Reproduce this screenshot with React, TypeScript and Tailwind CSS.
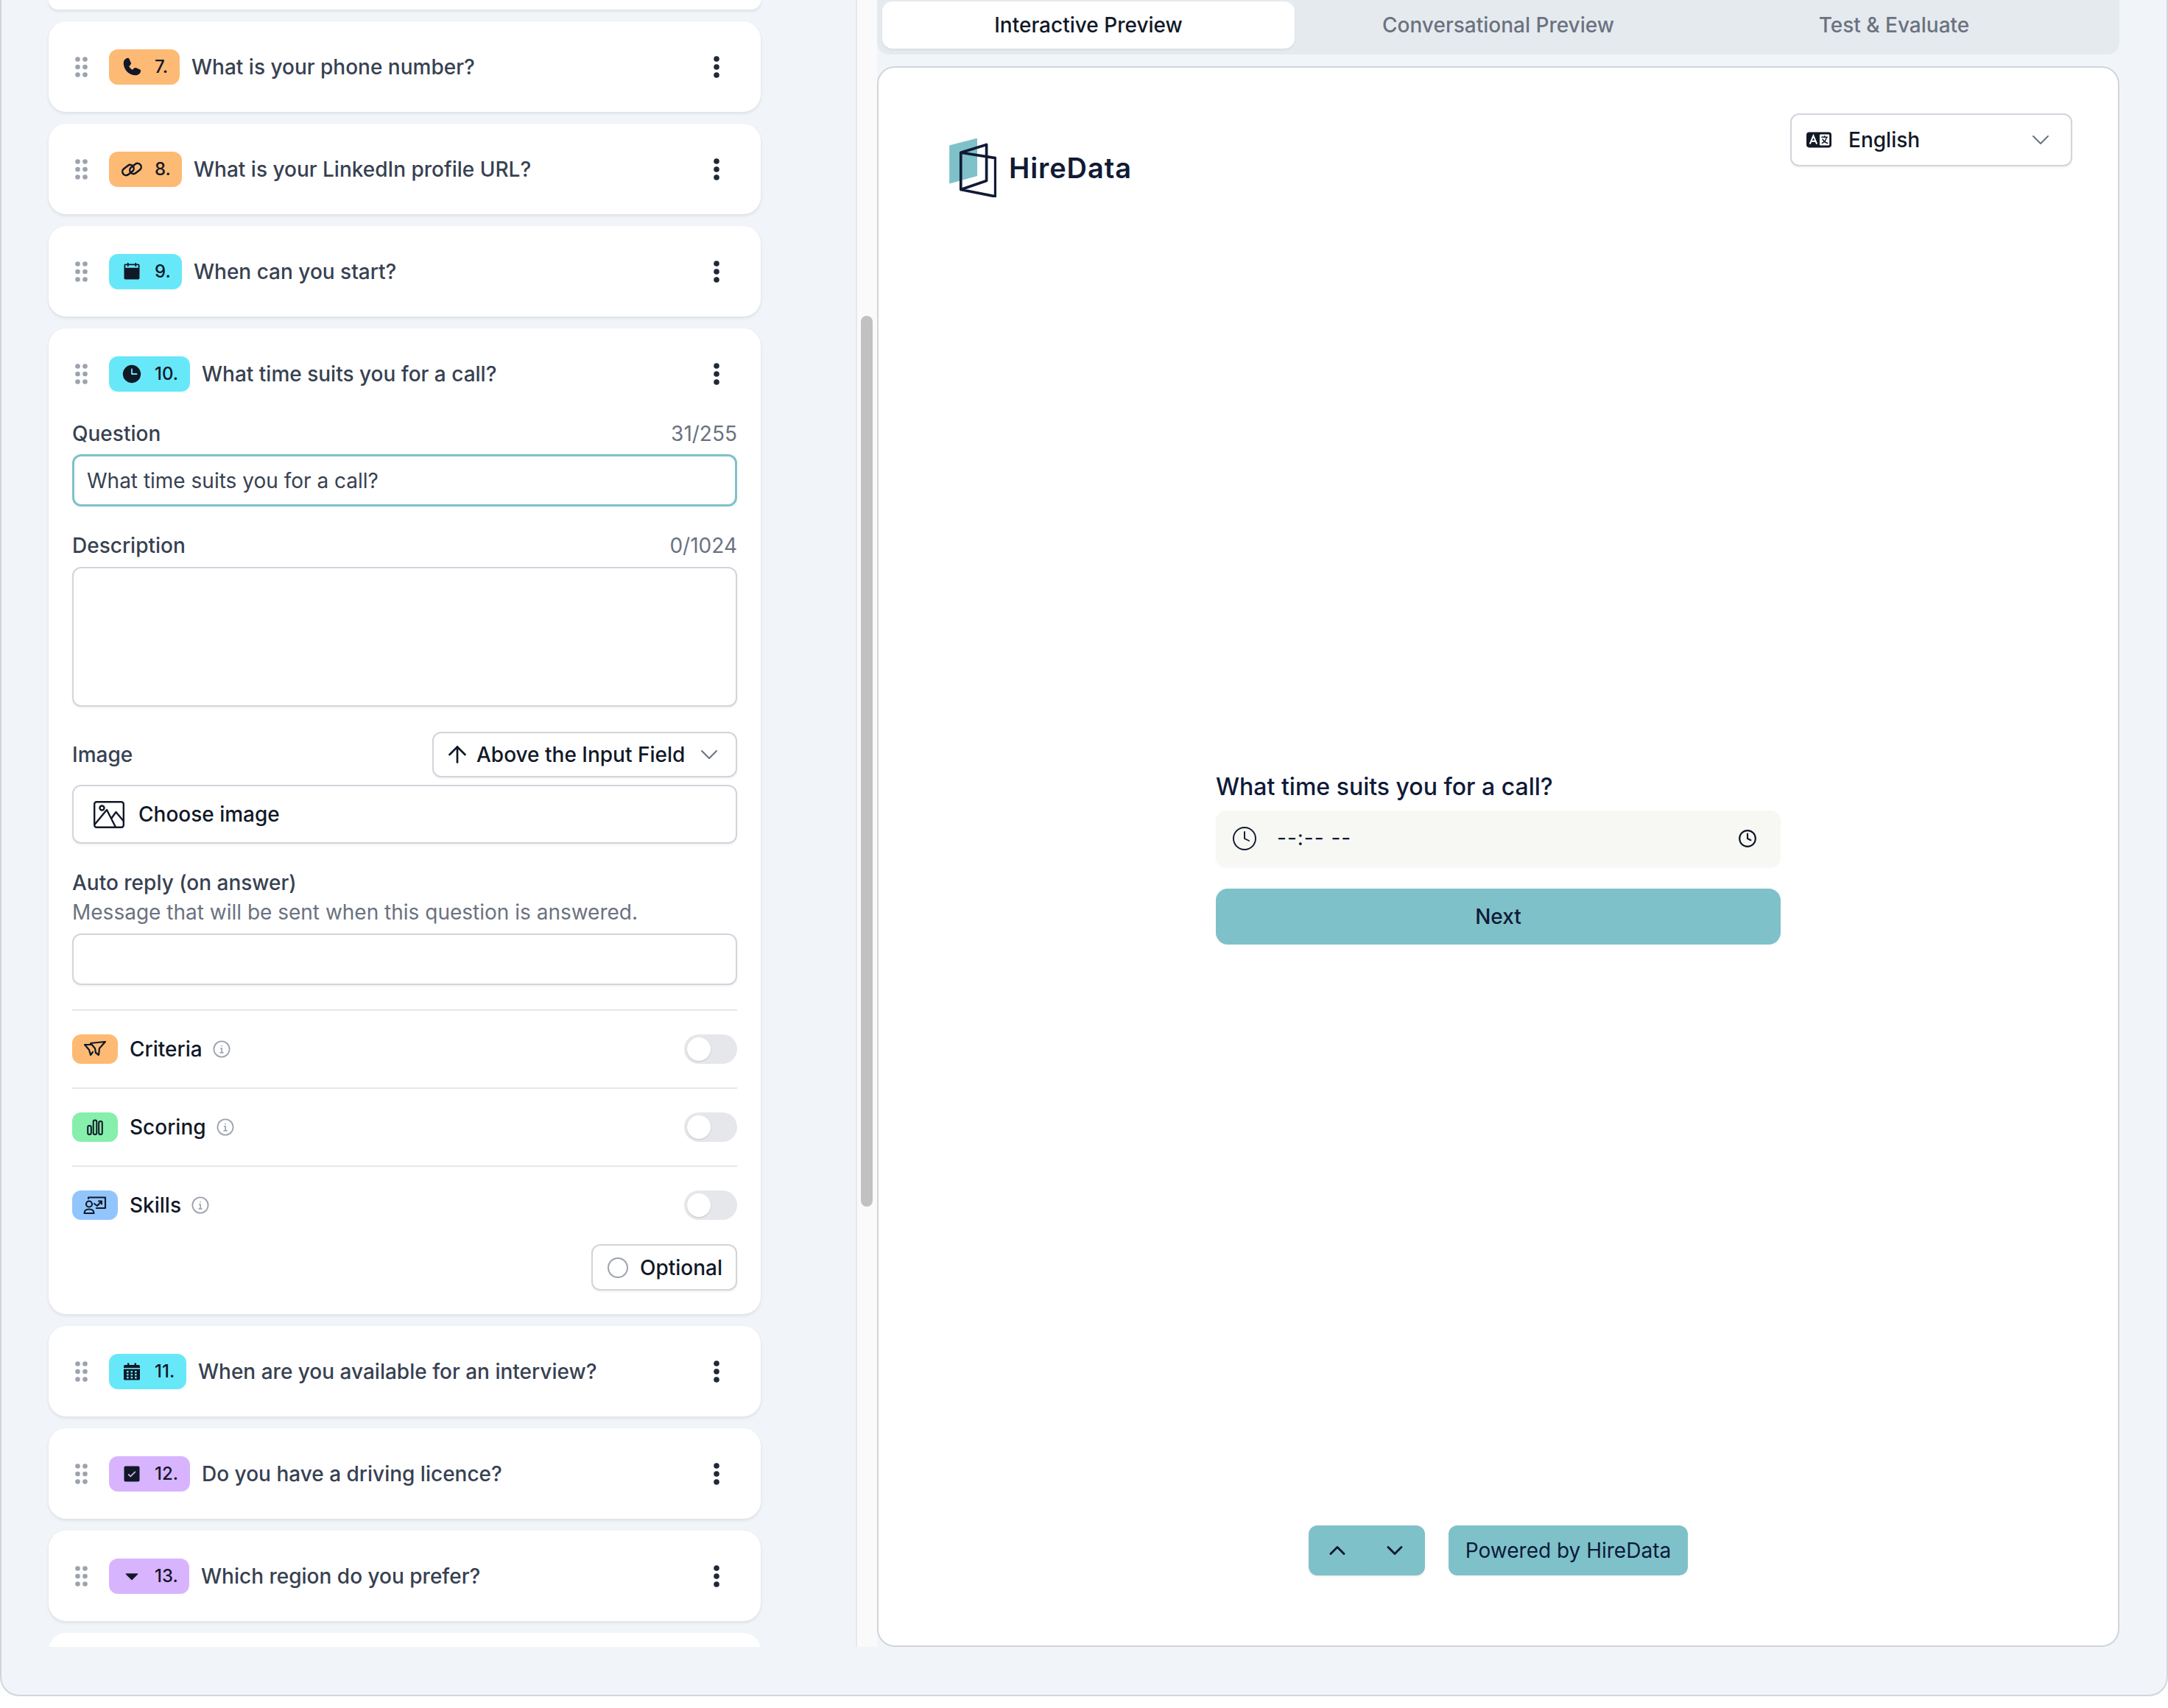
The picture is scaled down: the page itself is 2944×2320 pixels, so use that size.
import type { ReactNode } from "react";
import { ArrowUp, ChevronDown, ChevronUp, Clock } from "lucide-react";
import { PiCalendarBlankFill, PiCaretDownFill, PiCheckSquareFill, PiClockFill, PiPhoneFill } from "react-icons/pi";

function Grip() {
  return (
    <svg width="17" height="28" viewBox="0 0 17 28" className="shrink-0 fill-[#9ca3af]">
      {[3.5, 14, 24.5].map((y) => (
        <g key={y}>
          <circle cx="3.5" cy={y} r="3.3" />
          <circle cx="13.5" cy={y} r="3.3" />
        </g>
      ))}
    </svg>
  );
}

function Kebab() {
  return (
    <svg width="8" height="30" viewBox="0 0 8 30" className="shrink-0 fill-[#1f2937]">
      <circle cx="4" cy="4" r="3.8" />
      <circle cx="4" cy="15" r="3.8" />
      <circle cx="4" cy="26" r="3.8" />
    </svg>
  );
}

function LinkIcon() {
  return (
    <svg width="30" height="24" viewBox="0 0 30 24" fill="none" stroke="#111827" strokeWidth="2.5">
      <rect x="1.5" y="8" width="17" height="10" rx="5" transform="rotate(-38 10 13)" />
      <rect x="11.5" y="6" width="17" height="10" rx="5" transform="rotate(-38 20 11)" />
    </svg>
  );
}

function CalendarGridIcon() {
  return (
    <svg width="22" height="24" viewBox="0 0 22 24">
      <path d="M5 0.5h2.4v2.5h7.2V0.5H17v2.5h3a2 2 0 0 1 2 2v17a1.5 1.5 0 0 1-1.5 1.5h-19A1.5 1.5 0 0 1 0 22.500V5a2 2 0 0 1 2-2h3Z" fill="#111827" />
      <rect x="0" y="7" width="22" height="1.600" fill="#67e8f9" />
      {[11, 15, 19].map((y) =>
        [4, 9.500, 15].map((x) => <rect key={`${x}-${y}`} x={x} y={y} width="2.600" height="2.400" fill="#67e8f9" />),
      )}
    </svg>
  );
}

function InfoIcon() {
  return (
    <svg width="24" height="24" viewBox="0 0 24 24" fill="none" stroke="#9ca3af" strokeWidth="1.8" className="shrink-0">
      <circle cx="12" cy="12" r="10.6" />
      <circle cx="12" cy="7.6" r="0.9" fill="#9ca3af" stroke="none" />
      <path d="M10 11h2.2v5.6M9.6 16.8h5" strokeWidth="1.7" />
    </svg>
  );
}

function CriteriaIcon() {
  return (
    <svg width="32" height="24" viewBox="0 0 32 24" fill="none" stroke="#111827" strokeWidth="2.2" strokeLinejoin="round" strokeLinecap="round">
      <path d="M10 4 L30 2 L22 11 L21 20 L17 17 L16 11 Z" />
      <path d="M10 6 L2 6 L8 13 L10 20 L13 16" />
    </svg>
  );
}

function ScoringIcon() {
  return (
    <svg width="22" height="22" viewBox="0 0 22 22" fill="none" stroke="#111827" strokeWidth="2">
      <rect x="1.2" y="9" width="4.6" height="12" rx="2.3" />
      <rect x="8.7" y="1.5" width="4.6" height="19.5" rx="2.3" />
      <rect x="16.2" y="3" width="4.6" height="18" rx="2.3" />
    </svg>
  );
}

function SkillsIcon() {
  return (
    <svg width="32" height="26" viewBox="0 0 32 26" fill="none" stroke="#111827" strokeWidth="2.1" strokeLinecap="round" strokeLinejoin="round">
      <path d="M7 4 V2.5 H30 V17 H18" />
      <circle cx="8" cy="11.5" r="4" />
      <path d="M1.5 24 C1.5 20 4 18.5 8 18.5 C12 18.5 14.5 20 14.5 24 Z" />
      <path d="M15 11 L19 14 L25 7.5 M21 7.5 H25 V11.5" />
    </svg>
  );
}

function ImageIcon() {
  return (
    <svg width="42" height="37" viewBox="0 0 42 37" fill="none" stroke="#111827" strokeWidth="2.4" strokeLinejoin="round">
      <rect x="1.2" y="1.2" width="39.6" height="34.6" rx="3" />
      <circle cx="11.5" cy="9.5" r="3" />
      <path d="M1.5 32 L18 12 L30 35.5 M24 24 L30.5 15 L40.5 27" />
    </svg>
  );
}

function LanguageIcon() {
  return (
    <svg width="34" height="22" viewBox="0 0 36 22" className="shrink-0">
      <rect width="36" height="22" rx="4" fill="#111827" />
      <rect x="19" y="3" width="14" height="16" rx="1.5" fill="#fff" />
      <path d="M5 17 L10 5 L15 17 M7 13 H13" fill="none" stroke="#fff" strokeWidth="2.2" />
      <path d="M21.5 7 H30.5 M26 5 V7 M29 7 C28 12 25 15 22 16 M23 9.5 C24.5 13 27 15 31 16" fill="none" stroke="#111827" strokeWidth="1.6" />
    </svg>
  );
}

function Logo() {
  return (
    <svg width="64" height="80" viewBox="87 55 191 238" fill="none" className="shrink-0">
      <path d="M90 85 L198 57 V205 L90 235 Z" fill="#7fc1c9" stroke="#7fc1c9" strokeWidth="5" strokeLinejoin="round" />
      <path d="M134 112 L238 80 V226 L134 262 V112 L274 134 V290 L134 262" stroke="#111a35" strokeWidth="11" strokeLinejoin="round" />
    </svg>
  );
}

function Badge({ color, width, icon, num }: { color: string; width: string; icon: ReactNode; num: string }) {
  return (
    <span className={`flex h-[48px] shrink-0 items-center rounded-[12px] pl-[16px] ${color} ${width}`}>
      <span className="flex h-[32px] w-[30px] items-center justify-center text-[#111827]">{icon}</span>
      <span className="ml-[16px] text-[24px] font-medium text-[#111827]">{num}</span>
    </span>
  );
}

function Header({ badge, text }: { badge: ReactNode; text: string }) {
  return (
    <div className="flex h-[123px] items-center pl-[36px] pr-[56px]">
      <Grip />
      <span className="ml-[29px]">{badge}</span>
      <span className="ml-[16px] flex-1 text-[28px] font-medium text-[#374151]">{text}</span>
      <Kebab />
    </div>
  );
}

function Card({ children }: { children: ReactNode }) {
  return <div className="w-[967px] rounded-[24px] bg-white shadow-[0_2px_4px_rgba(15,23,42,0.1)]">{children}</div>;
}

const fieldClass = "rounded-[12px] border-2 border-[#d1d5db] bg-white shadow-[0_2px_3px_rgba(0,0,0,0.05)]";

function FieldLabel({ label, count }: { label: string; count: string }) {
  return (
    <div className="flex h-[40px] items-center justify-between text-[28px] font-medium leading-[40px] text-[#374151]">
      <span>{label}</span>
      <span className="font-normal text-[#6b7280]">{count}</span>
    </div>
  );
}

function FeatureRow({ chip, icon, label }: { chip: string; icon: ReactNode; label: string }) {
  return (
    <div className="flex h-[106px] items-center border-t-2 border-[#e5e7eb]">
      <span className={`flex h-[40px] w-[62px] items-center justify-center rounded-[12px] ${chip}`}>{icon}</span>
      <span className="ml-[16px] text-[28px] font-medium text-[#111827]">{label}</span>
      <span className="ml-[14px]">
        <InfoIcon />
      </span>
      <span className="ml-auto flex h-[40px] w-[72px] items-center rounded-full bg-[#e5e7eb] pl-[4px]">
        <span className="h-[32px] w-[32px] rounded-full bg-white shadow-[0_1px_2px_rgba(0,0,0,0.15)]" />
      </span>
    </div>
  );
}

function OpenCard() {
  return (
    <Card>
      <Header
        badge={<Badge color="bg-[#67e8f9]" width="w-[110px]" icon={<PiClockFill size={30} />} num="10." />}
        text="What time suits you for a call?"
      />
      <div className="px-[32px] pb-[32px]">
        <FieldLabel label="Question" count="31/255" />
        <div className="mt-[8px] flex h-[71px] items-center rounded-[12px] border-[3px] border-[#7fc1c9] pl-[17px] text-[28px] text-[#374151]">
          What time suits you for a call?
        </div>
        <div className="mt-[33px]">
          <FieldLabel label="Description" count="0/1024" />
        </div>
        <div className={`mt-[9px] h-[190px] ${fieldClass}`} />
        <div className="mt-[34px] flex h-[62px] items-center justify-between">
          <span className="text-[28px] font-medium text-[#374151]">Image</span>
          <div className={`flex h-[62px] w-[414px] items-center pl-[14px] pr-[16px] text-[28px] font-medium text-[#111827] ${fieldClass}`}>
            <ArrowUp size={36} strokeWidth={1.8} className="shrink-0" />
            <span className="ml-[8px]">Above the Input Field</span>
            <ChevronDown size={40} strokeWidth={1.2} className="ml-auto shrink-0 text-[#6b7280]" />
          </div>
        </div>
        <div className={`mt-[10px] flex h-[80px] items-center pl-[27px] text-[28px] font-medium text-[#111827] ${fieldClass}`}>
          <ImageIcon />
          <span className="ml-[19px]">Choose image</span>
        </div>
        <div className="mt-[33px] text-[28px] font-medium leading-[40px] text-[#374151]">Auto reply (on answer)</div>
        <div className="text-[28px] leading-[40px] text-[#6b7280]">Message that will be sent when this question is answered.</div>
        <div className={`mt-[9px] h-[70px] ${fieldClass}`} />
        <div className="mt-[33px]">
          <FeatureRow chip="bg-[#fdba74]" icon={<CriteriaIcon />} label="Criteria" />
          <FeatureRow chip="bg-[#86efac]" icon={<ScoringIcon />} label="Scoring" />
          <FeatureRow chip="bg-[#93c5fd]" icon={<SkillsIcon />} label="Skills" />
        </div>
        <div className="mt-[1px] flex justify-end">
          <div className={`flex h-[63px] w-[198px] items-center pl-[20px] text-[28px] font-medium text-[#111827] ${fieldClass}`}>
            <span className="h-[28px] w-[28px] rounded-full border-2 border-[#9ca3af]" />
            <span className="ml-[16px]">Optional</span>
          </div>
        </div>
      </div>
    </Card>
  );
}

function QuestionList() {
  return (
    <div className="flex h-full w-[1160px] flex-col gap-[16px] overflow-hidden pl-[64px]">
      <div className="h-[13px] w-[967px] shrink-0 rounded-b-[24px] bg-white shadow-[0_2px_4px_rgba(15,23,42,0.1)]" />
      <Card>
        <Header
          badge={<Badge color="bg-[#fdba74]" width="w-[96px]" icon={<PiPhoneFill size={30} />} num="7." />}
          text="What is your phone number?"
        />
      </Card>
      <Card>
        <Header badge={<Badge color="bg-[#fdba74]" width="w-[99px]" icon={<LinkIcon />} num="8." />} text="What is your LinkedIn profile URL?" />
      </Card>
      <Card>
        <Header badge={<Badge color="bg-[#67e8f9]" width="w-[99px]" icon={<PiCalendarBlankFill size={28} />} num="9." />} text="When can you start?" />
      </Card>
      <OpenCard />
      <Card>
        <Header badge={<Badge color="bg-[#67e8f9]" width="w-[105px]" icon={<CalendarGridIcon />} num="11." />} text="When are you available for an interview?" />
      </Card>
      <Card>
        <Header badge={<Badge color="bg-[#d8b4fe]" width="w-[110px]" icon={<PiCheckSquareFill size={28} />} num="12." />} text="Do you have a driving licence?" />
      </Card>
      <Card>
        <Header badge={<Badge color="bg-[#d8b4fe]" width="w-[109px]" icon={<PiCaretDownFill size={24} />} num="13." />} text="Which region do you prefer?" />
      </Card>
      <div className="h-[40px] w-[967px] shrink-0 rounded-t-[24px] bg-white" />
    </div>
  );
}

function Preview() {
  return (
    <div className="mt-[16px] h-[2147px] rounded-[24px] border-2 border-[#d1d5db] bg-white">
      <div className="flex h-[176px] items-start justify-between pl-[96px] pr-[62px] pt-[62px]">
        <div className="mt-[34px] flex items-start">
          <Logo />
          <span className="ml-[17px] mt-[15px] text-[38px] font-semibold leading-[50px] tracking-[0.9px] text-[#111a35]">HireData</span>
        </div>
        <div className={`flex h-[72px] w-[383px] items-center pl-[20px] pr-[21px] text-[28px] font-medium text-[#111827] ${fieldClass}`}>
          <LanguageIcon />
          <span className="ml-[23px]">English</span>
          <ChevronDown size={40} strokeWidth={1.2} className="ml-auto text-[#6b7280]" />
        </div>
      </div>
      <div className="mx-auto mt-[781px] w-[767px]">
        <div className="text-[32px] font-medium leading-[40px] text-[#0f1a38]">What time suits you for a call?</div>
        <div className="mt-[12px] flex h-[76px] items-center rounded-[14px] bg-[#f7f8f3] pl-[21px] pr-[32px] shadow-[0_2px_3px_rgba(0,0,0,0.03)]">
          <Clock size={36} strokeWidth={1.3} className="text-[#111a35]" />
          <span className="ml-[26px] mt-[-2px] text-[28px] tracking-[1px] text-[#111a35]">--:-- --</span>
          <Clock size={26} strokeWidth={2} className="ml-auto text-[#111827]" />
        </div>
        <div className="mt-[30px] flex h-[76px] items-center justify-center rounded-[16px] bg-[#7fc1c9] text-[28px] font-medium text-[#0f1a38]">
          Next
        </div>
      </div>
      <div className="mt-[789px] flex items-center justify-center gap-[32px]">
        <div className="flex h-[68px] w-[158px] rounded-[12px] bg-[#7fc1c9] text-[#0f1a38] shadow-[0_2px_3px_rgba(0,0,0,0.06)]">
          <span className="flex flex-1 items-center justify-center">
            <ChevronUp size={36} strokeWidth={2} />
          </span>
          <span className="flex flex-1 items-center justify-center border-l border-[#7dbec6] pr-[2px]">
            <ChevronDown size={36} strokeWidth={2} />
          </span>
        </div>
        <div className="flex h-[68px] w-[325px] items-center justify-center rounded-[12px] bg-[#7fc1c9] text-[28px] font-normal text-[#0b1a3a]">
          Powered by HireData
        </div>
      </div>
    </div>
  );
}

export default function App() {
  return (
    <div className="h-[2320px] w-[2944px] bg-white font-['Inter',sans-serif]">
      <div className="h-[2304px] rounded-b-[26px] border-x-2 border-b-2 border-[#d1d5db] bg-[#f1f5f9]">
        <div className="flex h-[2237px]">
          <QuestionList />
          <div className="h-full w-[2px] bg-[#e5e7eb]" />
          <div className="relative h-full w-[27px] bg-[#fafafa]">
            <div className="absolute left-[5px] top-[429px] h-[1210px] w-[16px] rounded-full bg-[#c1c1c1]" />
          </div>
          <div className="w-[1687px]">
            <div className="flex h-[74px] rounded-b-[16px] bg-[#e5eaef] pb-[8px] pl-[7px] pt-[2px] text-[28px] font-medium text-[#6b7280]">
              <div className="flex w-[560px] items-center justify-center rounded-[14px] bg-white text-[#111827] shadow-[0_2px_3px_rgba(0,0,0,0.06)]">
                Interactive Preview
              </div>
              <div className="flex w-[553px] items-center justify-center">Conversational Preview</div>
              <div className="flex w-[522px] items-center justify-center">Test &amp; Evaluate</div>
            </div>
            <Preview />
          </div>
        </div>
      </div>
    </div>
  );
}
